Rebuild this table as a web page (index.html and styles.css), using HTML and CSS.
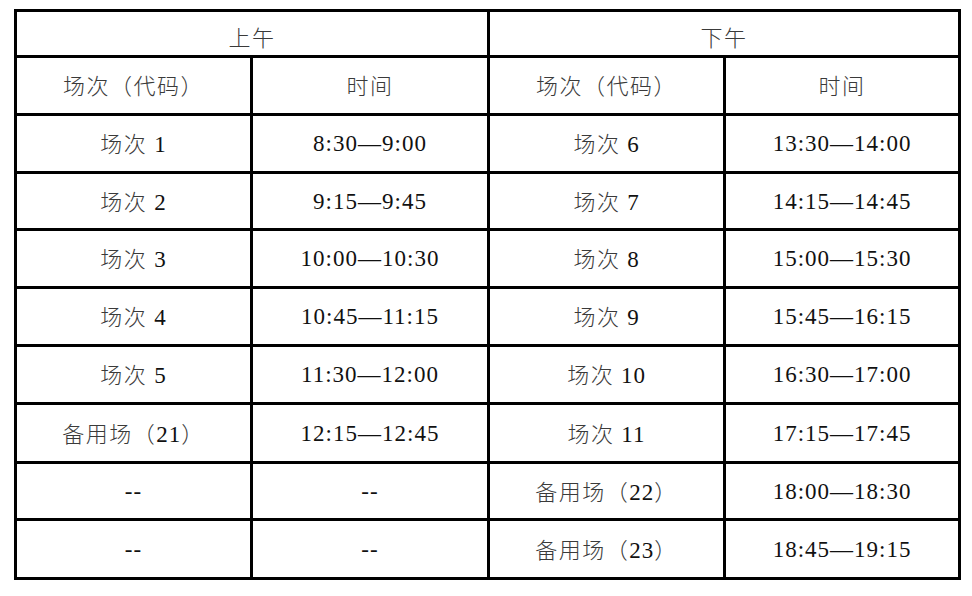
FILE: index.html
```html
<!DOCTYPE html>
<html lang="zh-CN">
<head>
<meta charset="utf-8">
<title>场次时间表</title>
<link rel="stylesheet" href="styles.css">
</head>
<body>
<table class="schedule">
  <colgroup>
    <col class="c1"><col class="c2"><col class="c3"><col class="c4">
  </colgroup>
  <tr class="r-head1"><td colspan="2"><span class="zh">上午</span></td><td colspan="2"><span class="zh">下午</span></td></tr>
  <tr class="r-head2"><td><span class="zh">场次（代码）</span></td><td><span class="zh">时间</span></td><td><span class="zh">场次（代码）</span></td><td><span class="zh">时间</span></td></tr>
  <tr class="r58"><td><span class="zh">场次</span> 1</td><td>8:30—9:00</td><td><span class="zh">场次</span> 6</td><td>13:30—14:00</td></tr>
  <tr class="r57"><td><span class="zh">场次</span> 2</td><td>9:15—9:45</td><td><span class="zh">场次</span> 7</td><td>14:15—14:45</td></tr>
  <tr class="r58"><td><span class="zh">场次</span> 3</td><td>10:00—10:30</td><td><span class="zh">场次</span> 8</td><td>15:00—15:30</td></tr>
  <tr class="r58"><td><span class="zh">场次</span> 4</td><td>10:45—11:15</td><td><span class="zh">场次</span> 9</td><td>15:45—16:15</td></tr>
  <tr class="r58"><td><span class="zh">场次</span> 5</td><td>11:30—12:00</td><td><span class="zh">场次</span> 10</td><td>16:30—17:00</td></tr>
  <tr class="r59"><td><span class="zh">备用场（</span>21<span class="zh">）</span></td><td>12:15—12:45</td><td><span class="zh">场次</span> 11</td><td>17:15—17:45</td></tr>
  <tr class="r57"><td>--</td><td>--</td><td><span class="zh">备用场（</span>22<span class="zh">）</span></td><td>18:00—18:30</td></tr>
  <tr class="r59"><td>--</td><td>--</td><td><span class="zh">备用场（</span>23<span class="zh">）</span></td><td>18:45—19:15</td></tr>
</table>
</body>
</html>
```
FILE: styles.css
```css
html, body {
  margin: 0;
  padding: 0;
  background: #ffffff;
}

.schedule {
  margin: 9px 0 0 14px;
  border-collapse: separate;
  border-spacing: 0;
  table-layout: fixed;
  width: 947px;
  border-top: 3px solid #000;
  border-left: 3px solid #000;
  font-family: "Liberation Serif", "Noto Sans CJK SC", serif;
  font-size: 23px;
  letter-spacing: 1px;
  color: #111;
}

.c1 { width: 236px; }
.c2 { width: 237px; }
.c3 { width: 236px; }
.c4 { width: 235px; }

.schedule td {
  box-sizing: border-box;
  border-right: 3px solid #000;
  border-bottom: 3px solid #000;
  padding: 0;
  text-align: center;
  vertical-align: middle;
  line-height: 1;
  white-space: nowrap;
}

.zh {
  font-family: "Noto Sans CJK SC", sans-serif;
  font-size: 22px;
  font-weight: 300;
  letter-spacing: 1.5px;
  color: #3a3a3a;
}

.r-head1 td { height: 46px; padding-top: 8px; }
.r-head2 td { height: 58px; }
.r57 td { height: 57px; }
.r58 td { height: 58px; }
.r59 td { height: 59px; }
```
